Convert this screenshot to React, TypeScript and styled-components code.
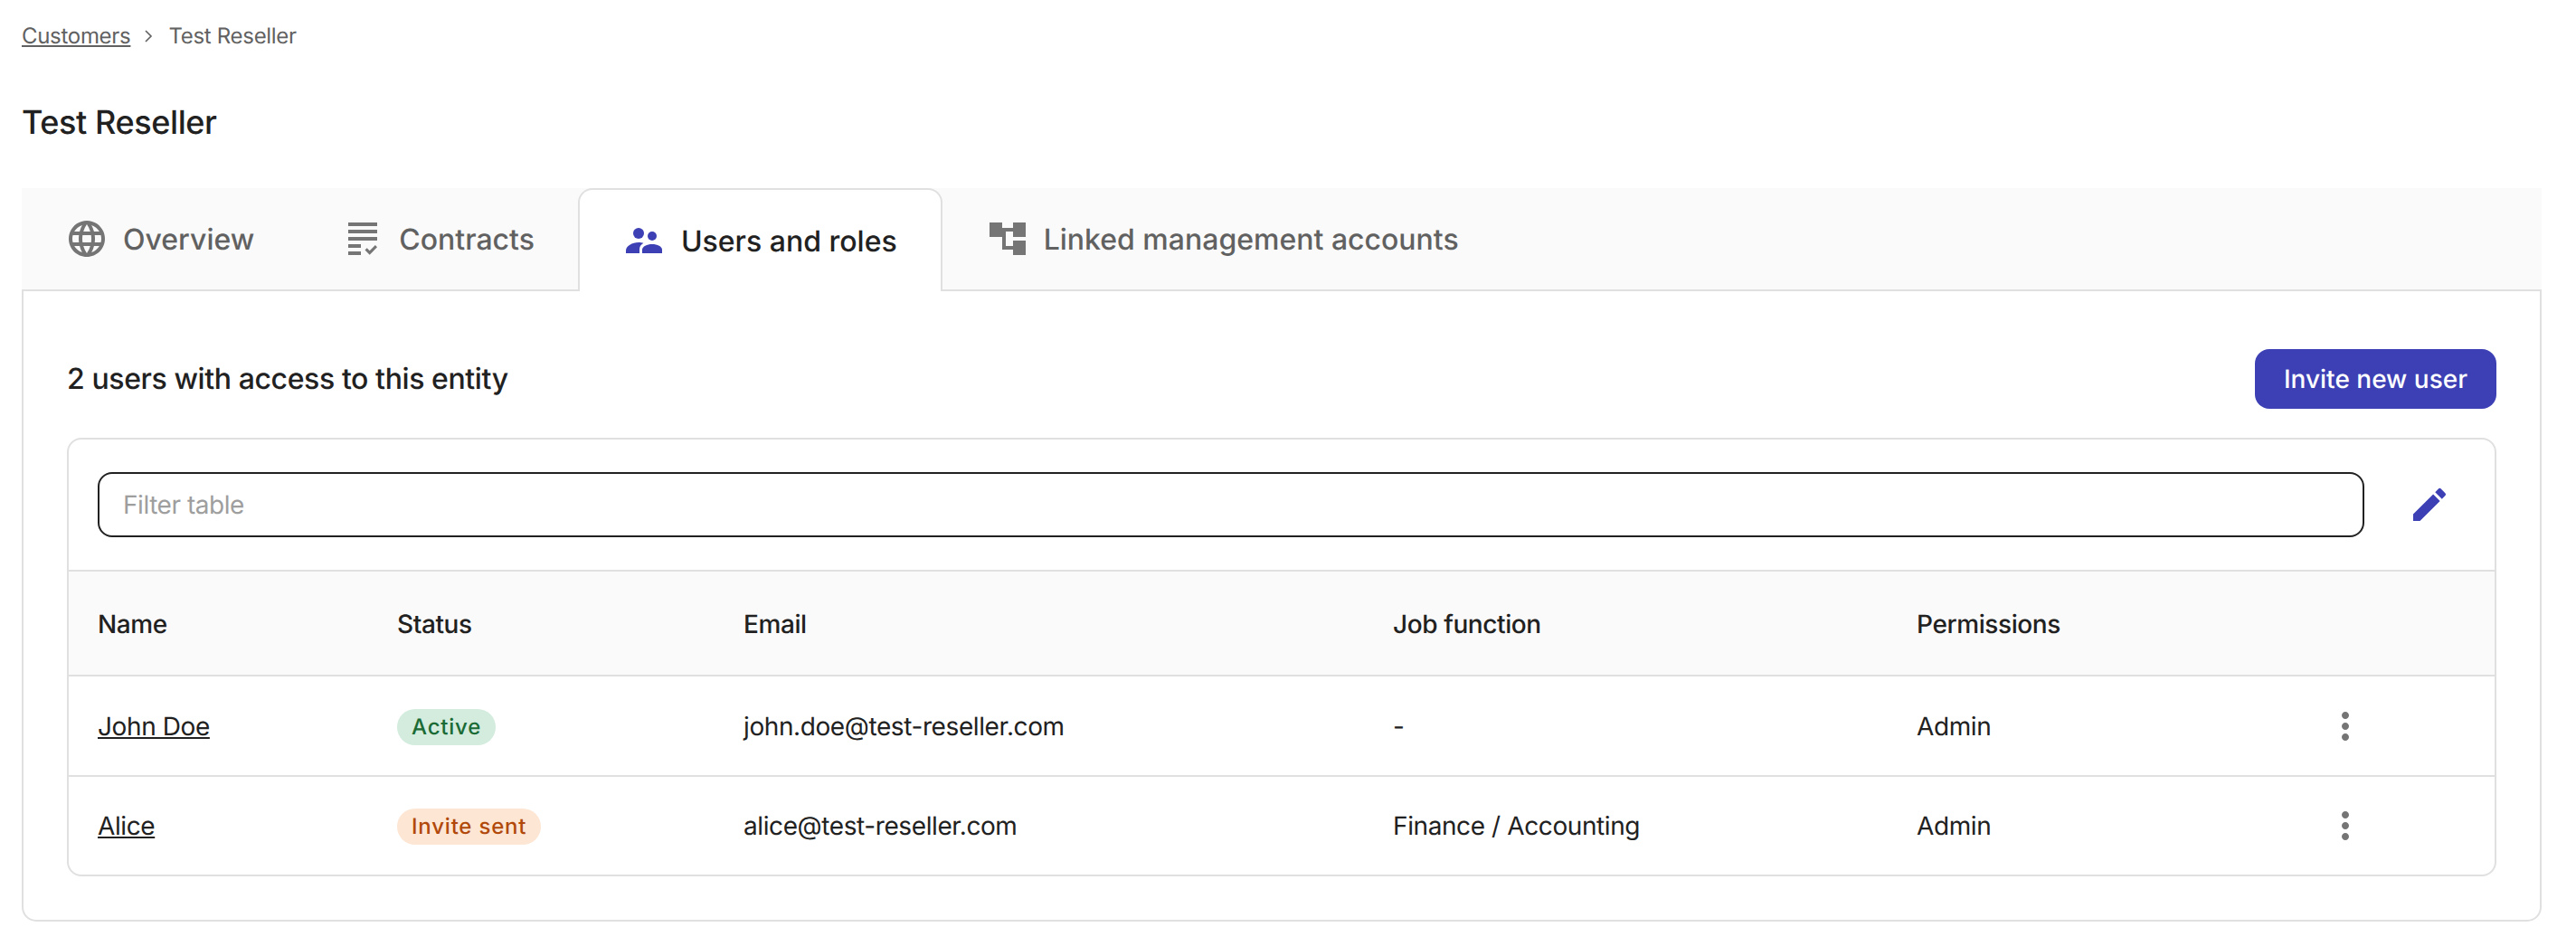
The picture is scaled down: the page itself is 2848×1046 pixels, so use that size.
import React from 'react';
import styled, { createGlobalStyle } from 'styled-components';
import { MdEdit, MdLanguage, MdMoreVert } from 'react-icons/md';

const GlobalStyle = createGlobalStyle`
	html, body {
		margin: 0;
		padding: 0;
		background: #fff;
	}
	body {
		font-family: Inter, "Liberation Sans", sans-serif;
		color: #212121;
		text-rendering: geometricPrecision;
	}
`;

const users = [
	{
		name: 'John Doe',
		status: 'Active',
		tone: 'success',
		email: 'john.doe@test-reseller.com',
		job: '-',
		permissions: 'Admin',
	},
	{
		name: 'Alice',
		status: 'Invite sent',
		tone: 'warning',
		email: 'alice@test-reseller.com',
		job: 'Finance / Accounting',
		permissions: 'Admin',
	},
];

const columns = ['Name', 'Status', 'Email', 'Job function', 'Permissions'];

function ContractsIcon() {
	return (
		<svg width="48" height="48" viewBox="0 0 48 48" fill="currentColor">
			<rect x="8" y="6" width="32" height="4" />
			<rect x="8" y="14" width="32" height="4" />
			<rect x="8" y="22" width="32" height="4" />
			<rect x="8" y="30" width="14" height="4" />
			<rect x="8" y="38" width="14" height="4" />
			<path d="M26.500 36.500l2.200-2.200 3 3 6.200-6.300 2.100 2.200-8.300 8.500z" />
		</svg>
	);
}

function UsersIcon() {
	return (
		<svg width="48" height="48" viewBox="0 0 48 48" fill="currentColor">
			<circle cx="18" cy="16" r="6" />
			<circle cx="33" cy="19" r="5" />
			<path d="M4 38v-3c0-5 7-9 14-9 2.200 0 3.800.3 5.400.8-2.900 1.700-4.400 4.200-4.400 7.200v4z" />
			<path d="M22 38v-4c0-3.400 5.300-6 11-6s11 2.600 11 6v4z" />
		</svg>
	);
}

function AccountsIcon() {
	return (
		<svg width="48" height="48" viewBox="0 0 48 48" fill="currentColor">
			<rect x="4" y="6" width="14" height="16" />
			<rect x="30" y="6" width="14" height="16" />
			<rect x="30" y="26" width="14" height="16" />
			<path d="M18 12h12v4h-8v16h8v4H18V16z" />
		</svg>
	);
}

export default function App() {
	return (
		<Page>
			<GlobalStyle />
			<Breadcrumbs>
				<CrumbLink href="#">Customers</CrumbLink>
				<Chevron width="10" height="14" viewBox="0 0 10 14">
					<path d="M2 1l6 6-6 6" />
				</Chevron>
				<span>Test Reseller</span>
			</Breadcrumbs>
			<PageTitle>Test Reseller</PageTitle>

			<TabBar>
				<Tab>
					<MdLanguage size={48} />
					<span>Overview</span>
				</Tab>
				<Tab>
					<ContractsIcon />
					<span>Contracts</span>
				</Tab>
				<Tab $active>
					<UsersIcon />
					<span>Users and roles</span>
				</Tab>
				<Tab>
					<AccountsIcon />
					<span>Linked management accounts</span>
				</Tab>
			</TabBar>

			<Panel>
				<PanelHeader>
					<PanelTitle>2 users with access to this entity</PanelTitle>
					<PrimaryButton>Invite new user</PrimaryButton>
				</PanelHeader>

				<TableCard>
					<Toolbar>
						<FilterInput placeholder="Filter table" />
						<EditButton>
							<MdEdit size={48} />
						</EditButton>
					</Toolbar>

					<HeadRow>
						{columns.map((col) => (
							<div key={col}>{col}</div>
						))}
					</HeadRow>

					{users.map((user) => (
						<BodyRow key={user.name}>
							<NameLink href="#">{user.name}</NameLink>
							<div>
								<Badge $tone={user.tone}>{user.status}</Badge>
							</div>
							<div>{user.email}</div>
							<div>{user.job}</div>
							<div>{user.permissions}</div>
							<MenuButton>
								<MdMoreVert size={48} />
							</MenuButton>
						</BodyRow>
					))}
				</TableCard>
			</Panel>
		</Page>
	);
}

const Page = styled.div`
	box-sizing: border-box;
	width: 2848px;
	padding: 24px 38px 27px 24px;
`;

const Breadcrumbs = styled.nav`
	display: flex;
	align-items: center;
	height: 32px;
	font-size: 24px;
	line-height: 32px;
	letter-spacing: -0.3px;
	color: #616161;
`;

const CrumbLink = styled.a`
	color: inherit;
	text-decoration: underline;
`;

const Chevron = styled.svg`
	margin: 0 17px 0 15px;
	fill: none;
	stroke: #616161;
	stroke-width: 1.6;
`;

const PageTitle = styled.h1`
	margin: 54px 0 48px;
	font-size: 36px;
	line-height: 50px;
	font-weight: 500;
	letter-spacing: -0.4px;
	color: #212121;
`;

const TabBar = styled.div`
	display: flex;
	height: 114px;
	background: #fafafa;
`;

const Tab = styled.div<{ $active?: boolean }>`
	box-sizing: border-box;
	display: flex;
	align-items: center;
	gap: ${(p) => (p.$active ? '17px' : '16px')};
	height: ${(p) => (p.$active ? '114px' : '112px')};
	padding: 0 48px;
	font-size: 32px;
	font-weight: 500;
	color: ${(p) => (p.$active ? '#212121' : '#616161')};
	background: ${(p) => (p.$active ? '#fff' : 'transparent')};
	position: relative;
	z-index: 1;
	${(p) =>
		p.$active &&
		`
		border: 2px solid #e0e0e0;
		border-bottom: 0;
		border-radius: 16px 16px 0 0;
		padding: 0 48px 0 47px;
	`}

	svg {
		flex: none;
		color: ${(p) => (p.$active ? '#3c40b4' : '#757575')};
	}
`;

const Panel = styled.section`
	box-sizing: border-box;
	margin-top: -2px;
	padding: 64px 48px 48px;
	border: 2px solid #e0e0e0;
	border-radius: 0 0 16px 16px;
`;

const PanelHeader = styled.div`
	display: flex;
	align-items: center;
	justify-content: space-between;
	margin-bottom: 32px;
`;

const PanelTitle = styled.h2`
	margin: 0;
	font-size: 32px;
	line-height: 44px;
	font-weight: 500;
	letter-spacing: -0.4px;
	color: #212121;
`;

const PrimaryButton = styled.button`
	height: 66px;
	padding: 0 32px;
	border: 0;
	border-radius: 16px;
	background: #3c40b4;
	color: #fff;
	font-family: inherit;
	font-size: 28px;
	font-weight: 500;
	text-rendering: geometricPrecision;
`;

const TableCard = styled.div`
	border: 2px solid #e0e0e0;
	border-radius: 16px;
	overflow: hidden;
`;

const Toolbar = styled.div`
	display: flex;
	align-items: center;
	gap: 48px;
	padding: 36px 48px 36px 32px;
	box-sizing: border-box;
	height: 144px;
`;

const FilterInput = styled.input`
	flex: 1;
	box-sizing: border-box;
	height: 72px;
	padding: 0 26px;
	border: 2px solid #212121;
	border-radius: 16px;
	font-family: inherit;
	font-size: 28px;
	letter-spacing: -0.45px;
	color: #212121;
	outline: none;
	text-rendering: geometricPrecision;

	&::placeholder {
		color: #9e9e9e;
		opacity: 1;
	}
`;

const EditButton = styled.div`
	display: flex;
	color: #3c40b4;
`;

const rowGrid = `
	display: grid;
	grid-template-columns: 331px 383px 718px 579px 450px 48px;
	align-items: center;
	padding-left: 32px;
	box-sizing: border-box;
	font-size: 28px;
	line-height: 40px;
	letter-spacing: -0.4px;
	color: #212121;
`;

const HeadRow = styled.div`
	${rowGrid}
	height: 118px;
	padding-top: 1px;
	background: #fafafa;
	border-top: 2px solid #e0e0e0;
	border-bottom: 2px solid #e0e0e0;
	font-weight: 500;
`;

const BodyRow = styled.div`
	${rowGrid}
	height: 111px;
	border-bottom: 2px solid #e0e0e0;

	&:last-child {
		height: 108px;
		border-bottom: 0;
	}
`;

const NameLink = styled.a`
	justify-self: start;
	color: #212121;
	text-decoration: underline;
`;

const badgeTones: Record<string, { bg: string; fg: string }> = {
	success: { bg: '#d3ecdd', fg: '#1b6b36' },
	warning: { bg: '#fde6d3', fg: '#b1490b' },
};

const Badge = styled.span<{ $tone: string }>`
	display: inline-flex;
	align-items: center;
	height: 40px;
	padding: 0 16px;
	border-radius: 20px;
	font-size: 24px;
	font-weight: 500;
	letter-spacing: 0.8px;
	background: ${(p) => badgeTones[p.$tone].bg};
	color: ${(p) => badgeTones[p.$tone].fg};
`;

const MenuButton = styled.div`
	display: flex;
	color: #757575;
`;
